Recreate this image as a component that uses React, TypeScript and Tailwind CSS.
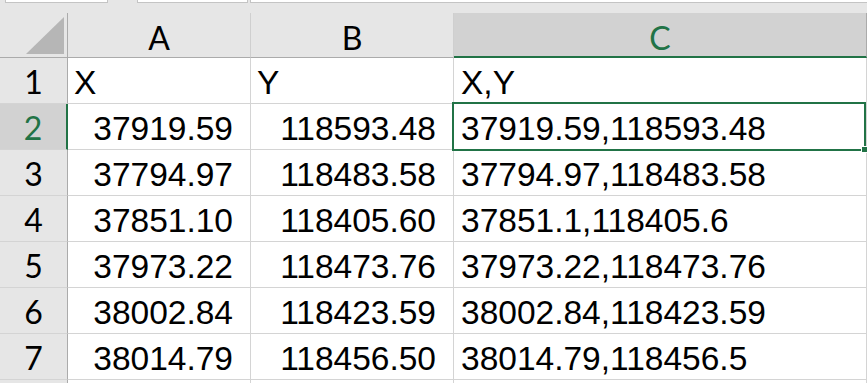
import React from 'react';

const GREEN = '#217346';

type Row = { n: number; a: string; b: string; c: string; text?: boolean };

const rows: Row[] = [
  { n: 1, a: 'X', b: 'Y', c: 'X,Y', text: true },
  { n: 2, a: '37919.59', b: '118593.48', c: '37919.59,118593.48' },
  { n: 3, a: '37794.97', b: '118483.58', c: '37794.97,118483.58' },
  { n: 4, a: '37851.10', b: '118405.60', c: '37851.1,118405.6' },
  { n: 5, a: '37973.22', b: '118473.76', c: '37973.22,118473.76' },
  { n: 6, a: '38002.84', b: '118423.59', c: '38002.84,118423.59' },
  { n: 7, a: '38014.79', b: '118456.50', c: '38014.79,118456.5' },
];

const cellFont = "font-['Liberation_Sans',Arial,sans-serif] text-[33.5px] leading-[41px] pt-[4px] text-black whitespace-nowrap";
const headFont = "font-['Lato','Liberation_Sans',sans-serif]";

function ColumnHeader({ label, width, selected, last }: { label: string; width: string; selected?: boolean; last?: boolean }) {
  return (
    <div
      className={`${width} shrink-0 h-full text-center ${headFont} text-[32px] leading-[39px] pt-[5px] ${
        selected
          ? 'bg-[#d2d2d2] text-[#217346] border-b-2 border-b-[#217346]'
          : 'bg-[#e6e6e6] text-black border-b border-b-[#ababab]'
      } ${last ? 'border-r border-r-[#ababab]' : 'border-r border-r-[#cfcfcf]'}`}
    >
      {label}
    </div>
  );
}

function SheetRow({ row }: { row: Row }) {
  const selected = row.n === 2;
  return (
    <div className="flex h-[46px] shrink-0">
      <div
        className={`w-[68px] shrink-0 text-center border-b border-b-[#d4d4d4] ${headFont} text-[32px] leading-[43px] pt-[2px] ${
          selected
            ? 'bg-[#d2d2d2] text-[#217346] border-r-2 border-r-[#217346]'
            : 'bg-[#e6e6e6] text-black border-r border-r-[#ababab]'
        }`}
      >
        {row.n}
      </div>
      <div className={`w-[183px] shrink-0 border-r border-b border-[#d4d4d4] ${cellFont} ${row.text ? 'pl-[6px]' : 'text-right pr-[17px]'}`}>
        {row.a}
      </div>
      <div className={`w-[203px] shrink-0 border-r border-b border-[#d4d4d4] ${cellFont} ${row.text ? 'pl-[6px]' : 'text-right pr-[17px]'}`}>
        {row.b}
      </div>
      <div className={`w-[413px] shrink-0 border-r border-b border-[#d4d4d4] ${cellFont} pl-[7px]`}>{row.c}</div>
    </div>
  );
}

export default function App() {
  return (
    <div className="w-[867px] h-[383px] overflow-hidden bg-white relative">
      {/* strip above the headers */}
      <div className="h-[13px] bg-[#e6e6e6] flex items-start">
        <div className="ml-[5px] w-[103px] h-[3px] bg-white border-x border-b border-[#c4c4c4]" />
        <div className="ml-[29px] w-[111px] h-[3px] bg-white border-x border-b border-[#c4c4c4]" />
        <div className="ml-[2px] flex-1 h-[3px] bg-white border-l border-b border-[#c4c4c4]" />
      </div>

      {/* column headers */}
      <div className="flex h-[45px]">
        <div className="w-[68px] shrink-0 h-full bg-[#e6e6e6] border-r border-r-[#ababab] border-b border-b-[#ababab] flex items-start justify-end pr-[3px] pt-[4px]">
          <svg width="38" height="37" viewBox="0 0 38 37">
            <polygon points="38,0 38,37 0,37" fill="#b6b6b6" />
          </svg>
        </div>
        <ColumnHeader label="A" width="w-[183px]" />
        <ColumnHeader label="B" width="w-[203px]" />
        <ColumnHeader label="C" width="w-[413px]" selected last />
      </div>

      {rows.map((r) => (
        <SheetRow key={r.n} row={r} />
      ))}
      <div className="flex h-[46px]">
        <div className="w-[68px] shrink-0 bg-[#e6e6e6] border-r border-r-[#ababab]" />
        <div className="w-[183px] shrink-0 border-r border-[#d4d4d4]" />
        <div className="w-[203px] shrink-0 border-r border-[#d4d4d4]" />
        <div className="w-[413px] shrink-0 border-r border-[#d4d4d4]" />
      </div>

      {/* active cell C2 */}
      <div className="absolute left-[452px] top-[102px] w-[414px] h-[49px] border-2 pointer-events-none" style={{ borderColor: GREEN }} />
      <div className="absolute left-[861px] top-[146px] w-[7px] h-[7px] bg-[#217346] border border-white" />
    </div>
  );
}
